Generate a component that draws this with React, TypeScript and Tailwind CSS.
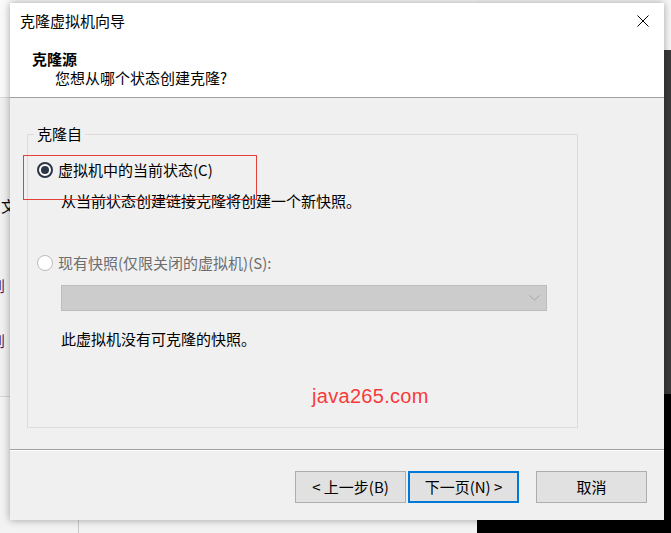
import React from "react";

function Radio({ checked, disabled }: { checked?: boolean; disabled?: boolean }) {
  return (
    <span
      className={
        "flex items-center justify-center w-[16px] h-[16px] rounded-full bg-white shrink-0 " +
        (disabled ? "border border-[#bcbcbc]" : "border-2 border-[#2a3645]")
      }
    >
      {checked && <span className="block w-[8px] h-[8px] rounded-full bg-[#2a3645]" />}
    </span>
  );
}

export default function App() {
  return (
    <div className="relative w-[671px] h-[533px] overflow-hidden bg-[#f3f3f3] text-[15px] text-black font-['Noto_Sans_CJK_SC',sans-serif]">
      {/* desktop behind the wizard */}
      <div className="flex h-full">
        <div className="flex flex-col w-[477px]">
          <div className="h-[98px] bg-[#fafafa] border-b border-[#d6d6d6]" />
          <div className="h-[299px] bg-[#f0f0f0] border-b border-[#d6d6d6] leading-[16px]">
            <div className="mt-[100px] ml-[-14px]">用文</div>
            <div className="mt-[64px] ml-[-10px] text-[#4b1a6e]">到</div>
            <div className="mt-[39px] ml-[-10px] text-[#4b1a6e]">到</div>
          </div>
          <div className="flex-1 flex">
            <div className="ml-[78px] w-px bg-[#c8c8c8]" />
          </div>
        </div>
        <div className="flex flex-col flex-1">
          <div className="h-[50px] bg-[#f7f7f7]" />
          <div className="h-[344px] bg-[#3a3a3a]" />
          <div className="flex-1 bg-black" />
        </div>
      </div>

      {/* wizard window */}
      <div className="absolute left-[10px] top-[3px] w-[654px] h-[517px] flex flex-col bg-[#f0f0f0] shadow-[0_0_8px_rgba(0,0,0,0.35)]">
        <div className="h-[95px] bg-white border-b border-[#a0a0a0]">
          <div className="flex items-center justify-between h-[36px] pl-[10px] pr-[15px]">
            <span className="leading-[20px]">克隆虚拟机向导</span>
            <svg width="12" height="12" viewBox="0 0 12 12">
              <path d="M0.5 0.5 L11.5 11.5 M11.5 0.5 L0.5 11.5" stroke="#000" strokeWidth="1" fill="none" />
            </svg>
          </div>
          <div className="mt-[10px] pl-[22px] font-bold leading-[19px]">克隆源</div>
          <div className="pl-[45px] leading-[19px]">您想从哪个状态创建克隆?</div>
        </div>

        <div className="h-[351px] pt-[26px] pl-[17px]">
          <fieldset className="w-[551px] h-[304px] border border-[#dcdcdc] pl-[9px]">
            <legend className="ml-[-3px] px-[3px] leading-[20px]">克隆自</legend>
            <div className="mt-[16px] flex items-center gap-[5px] h-[20px]">
              <Radio checked />
              <span className="leading-[20px]">虚拟机中的当前状态(C)</span>
            </div>
            <div className="mt-[11px] ml-[24px] leading-[20px]">从当前状态创建链接克隆将创建一个新快照。</div>
            <div className="mt-[42px] flex items-center gap-[5px] h-[20px]">
              <Radio disabled />
              <span className="leading-[20px] text-[#6d6d6d]">现有快照(仅限关闭的虚拟机)(S):</span>
            </div>
            <div className="mt-[12px] ml-[24px] w-[486px] h-[26px] flex items-center justify-end pr-[6px] bg-[#cccccc] border border-[#bdbdbd]">
              <svg width="11" height="6" viewBox="0 0 11 6">
                <polyline points="0.5,0.5 5.5,5 10.5,0.5" stroke="#a3a3a3" strokeWidth="1" fill="none" />
              </svg>
            </div>
            <div className="mt-[18px] ml-[24px] leading-[20px]">此虚拟机没有可克隆的快照。</div>
            <div className="mt-[33px] ml-[275px] leading-[28px] text-[20px] tracking-[0.3px] text-[#f83a3a] font-['Liberation_Sans',sans-serif]">
              java265.com
            </div>
          </fieldset>
        </div>

        <div className="flex-1 flex justify-end gap-[2px] pt-[21px] pr-[17px] border-t border-[#a0a0a0] shadow-[inset_0_1px_0_#ffffff]">
          <button className="w-[111px] h-[32px] bg-[#e1e1e1] border border-[#adadad] leading-[20px]">&lt; 上一步(B)</button>
          <button className="w-[111px] h-[32px] bg-[#e1e1e1] border-2 border-[#0078d7] leading-[20px]">下一页(N) &gt;</button>
          <button className="ml-[15px] w-[111px] h-[32px] bg-[#e1e1e1] border border-[#adadad] leading-[20px]">取消</button>
        </div>

        {/* red annotation box */}
        <div className="absolute left-[13px] top-[152px] w-[234px] h-[45px] border border-[#e5413b]" />
      </div>
    </div>
  );
}
